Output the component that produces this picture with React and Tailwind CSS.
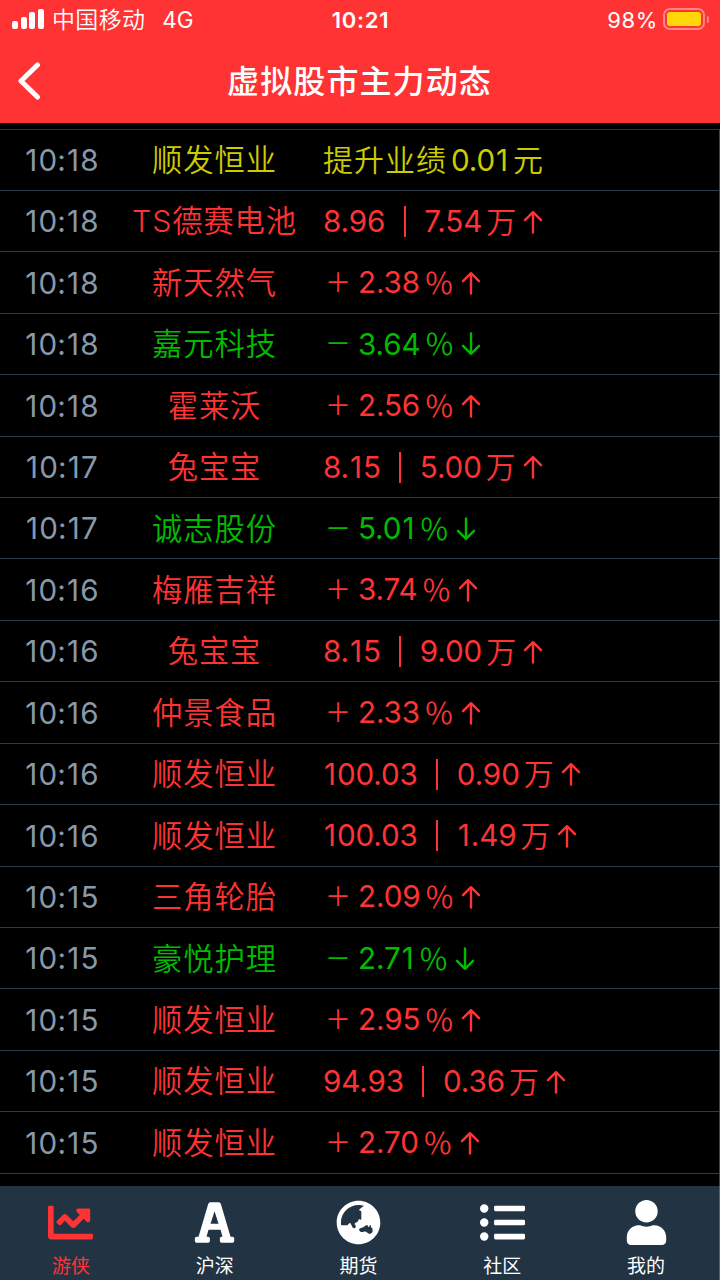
import { FaChartLine, FaGlobeAsia, FaListUl, FaUser } from "react-icons/fa";

const records = [
    { time: '10:18', name: '顺发恒业', type: 'news', text: '提升业绩', value: '0.01', unit: '元' },
    { time: '10:18', name: 'TS德赛电池', type: 'up', price: '8.96', value: '7.54' },
    { time: '10:18', name: '新天然气', type: 'up', value: '2.38' },
    { time: '10:18', name: '嘉元科技', type: 'down', value: '3.64' },
    { time: '10:18', name: '霍莱沃', type: 'up', value: '2.56' },
    { time: '10:17', name: '兔宝宝', type: 'up', price: '8.15', value: '5.00' },
    { time: '10:17', name: '诚志股份', type: 'down', value: '5.01' },
    { time: '10:16', name: '梅雁吉祥', type: 'up', value: '3.74' },
    { time: '10:16', name: '兔宝宝', type: 'up', price: '8.15', value: '9.00' },
    { time: '10:16', name: '仲景食品', type: 'up', value: '2.33' },
    { time: '10:16', name: '顺发恒业', type: 'up', price: '100.03', value: '0.90' },
    { time: '10:16', name: '顺发恒业', type: 'up', price: '100.03', value: '1.49' },
    { time: '10:15', name: '三角轮胎', type: 'up', value: '2.09' },
    { time: '10:15', name: '豪悦护理', type: 'down', value: '2.71' },
    { time: '10:15', name: '顺发恒业', type: 'up', value: '2.95' },
    { time: '10:15', name: '顺发恒业', type: 'up', price: '94.93', value: '0.36' },
    { time: '10:15', name: '顺发恒业', type: 'up', value: '2.70' },
];

// heavier slab icon than FaFont
const FontIcon = ({ className }) => (
    <svg viewBox="11.4 12 135 135" className={className} fill="currentColor">
        <path fillRule="evenodd" d="M66 19h26q4 0 6 5l29 98h6q5 0 5 5v8q0 5-5 5h-33q-5 0-5-5v-8q0-5 5-5h3l-6-21H61l-6 21h5q5 0 5 5v8q0 5-5 5H25q-5 0-5-5v-8q0-5 5-5h6l29-98q2-5 6-5zM79 46L67 83h24z" />
    </svg>
);

const tabs = [
    { label: '游侠', icon: FaChartLine, active: true },
    { label: '沪深', icon: FontIcon },
    { label: '期货', icon: FaGlobeAsia },
    { label: '社区', icon: FaListUl },
    { label: '我的', icon: FaUser },
];

const colors = {
    up: 'text-[#ff3333]',
    down: 'text-[#00bb00]',
    news: 'text-[#cccc00]',
};

// the digit 1 gets a bit more room so the numbers line up
const Num = ({ children }) => (
    <span className="text-[29.6px] font-[380]">
        {children.split('').map((c, i) => (
            <span key={i} className={c === '1' ? 'mx-[1px]' : ''}>{c}</span>
        ))}
    </span>
);

const Arrow = ({ down }) => (
    <svg viewBox="0 0 20 24" className={`ml-[7px] h-6 w-5 ${down ? 'rotate-180' : ''}`} fill="none" stroke="currentColor" strokeWidth="2.4" strokeLinecap="round" strokeLinejoin="round">
        <path d="M10 22.5V2.2M2 10.2l8-8 8 8" />
    </svg>
);

const Detail = ({ record }) => {
    if (record.type === 'news') {
        return (
            <>
                <span className="tracking-[1px]">{record.text}</span>
                <span className="mx-[4px]"><Num>{record.value}</Num></span>
                <span>{record.unit}</span>
            </>
        );
    }
    const down = record.type === 'down';
    return (
        <>
            {record.price ? (
                <>
                    <Num>{record.price}</Num>
                    <span className="flex w-[39px] justify-center"><span className="h-[31px] w-[2px] bg-current" /></span>
                    <Num>{record.value}</Num>
                    <span className="ml-[4px]">万</span>
                </>
            ) : (
                <>
                    <span className="w-[35px] pl-[2px] text-[26px] font-normal">{down ? '－' : '＋'}</span>
                    <Num>{record.value}</Num>
                    <span className="ml-[4px]">％</span>
                </>
            )}
            <Arrow down={down} />
        </>
    );
};

const StatusBar = () => (
    <div className="flex h-10 items-center justify-between pl-3 pr-[11px] text-[23px]">
        <div className="flex w-[240px] items-center">
            <div className="mb-[2px] flex items-end gap-[2.7px]">
                <i className="h-2 w-[6px] rounded-[2px] bg-white" />
                <i className="h-3 w-[6px] rounded-[2px] bg-white" />
                <i className="h-[17px] w-[6px] rounded-[2px] bg-white" />
                <i className="h-5 w-[6px] rounded-[2px] bg-white" />
            </div>
            <span className="ml-[8px] pt-[1px] font-[350] tracking-[0.3px]">中国移动</span>
            <span className="ml-[17px] text-[22.5px] font-[380]">4G</span>
        </div>
        <span className="text-[22px] font-semibold tracking-[0.7px]">10:21</span>
        <div className="flex w-[240px] items-center justify-end">
            <span className="text-[22px] font-[380] tracking-[0.6px]">98%</span>
            <div className="mb-[2px] ml-[5px] h-[22px] w-[42px] rounded-[7px] border-2 border-white/40 p-[2px]">
                <div className="h-full w-[34px] rounded-[3px] bg-[#ffd60a]" />
            </div>
            <div className="mb-[2px] ml-[2px] h-[7px] w-[2px] rounded-r bg-white/40" />
        </div>
    </div>
);

export default function App() {
    return (
        <div className="flex h-[1280px] w-[720px] flex-col overflow-hidden bg-black font-['Inter','Noto_Sans_CJK_SC',sans-serif]">
            <header className="h-[123px] shrink-0 bg-[#ff3333] text-white">
                <StatusBar />
                <div className="flex h-[83px] items-center">
                    <svg viewBox="0 0 24 38" className="mb-[1px] ml-[17px] h-[38px] w-6 shrink-0" fill="none" stroke="currentColor" strokeWidth="5" strokeLinecap="round" strokeLinejoin="round">
                        <path d="M20.5 3L4 19l16.5 16" />
                    </svg>
                    <h1 className="mr-[42px] flex-1 text-center text-[32px] font-medium tracking-[1.1px]">虚拟股市主力动态</h1>
                </div>
            </header>

            <main className="mt-[5.5px] min-h-0 flex-1 border-r border-t border-r-[#444444] border-t-[#223344]">
                {records.map((record, i) => (
                    <div key={i} className="flex h-[61.43px] items-center border-b border-[#2c3b4b] pt-[1px] text-[30px] font-[350] leading-none">
                        <div className="w-[123px] text-center tracking-[0.2px] text-[#8899aa]"><Num>{record.time}</Num></div>
                        <div className={`w-[183px] text-center text-[30.3px] tracking-[0.9px] ${colors[record.type]}`}>{record.name}</div>
                        <div className={`ml-[17px] flex items-center tracking-[-0.1px] ${colors[record.type]}`}>
                            <Detail record={record} />
                        </div>
                    </div>
                ))}
            </main>

            <nav className="flex h-[94px] shrink-0 border-r border-[#55606a] bg-[#223344]">
                {tabs.map(({ label, icon: Icon, active }) => (
                    <div key={label} className={`flex flex-1 flex-col items-center pr-[2px] pt-[14px] ${active ? 'text-[#ff3333]' : 'text-white'}`}>
                        <Icon className="size-[45px]" />
                        <span className="mt-[9px] text-[19px] leading-[26px]">{label}</span>
                    </div>
                ))}
            </nav>
        </div>
    );
}
